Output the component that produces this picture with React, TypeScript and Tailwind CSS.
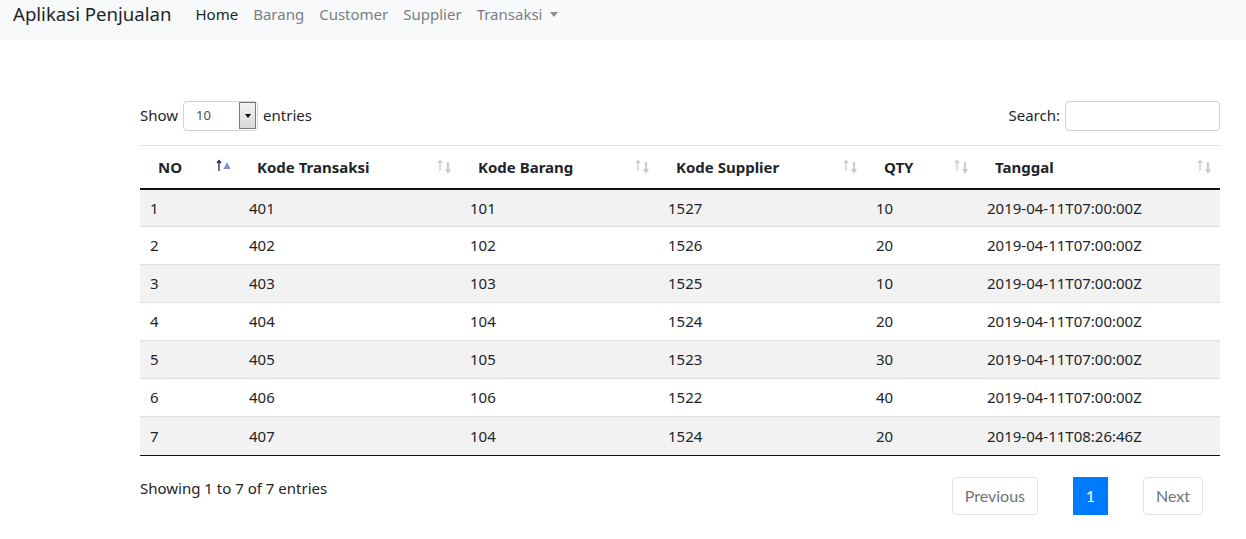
import React from "react";

const rows = [
  ["1", "401", "101", "1527", "10", "2019-04-11T07:00:00Z"],
  ["2", "402", "102", "1526", "20", "2019-04-11T07:00:00Z"],
  ["3", "403", "103", "1525", "10", "2019-04-11T07:00:00Z"],
  ["4", "404", "104", "1524", "20", "2019-04-11T07:00:00Z"],
  ["5", "405", "105", "1523", "30", "2019-04-11T07:00:00Z"],
  ["6", "406", "106", "1522", "40", "2019-04-11T07:00:00Z"],
  ["7", "407", "104", "1524", "20", "2019-04-11T08:26:46Z"],
];

const headers = [
  { label: "NO", w: "w-[99px]", active: true },
  { label: "Kode Transaksi", w: "w-[221px]" },
  { label: "Kode Barang", w: "w-[198px]" },
  { label: "Kode Supplier", w: "w-[208px]" },
  { label: "QTY", w: "w-[111px]" },
  { label: "Tanggal", w: "w-[243px]" },
];

function SortIcon({ active }: { active?: boolean }) {
  return (
    <svg width="20" height="16" viewBox="0 0 20 16" className="absolute right-[5px] top-[13px]">
      {/* up arrow */}
      <path d="M5 2 L5 12 M3 4 L5 1.5 L7 4" stroke={active ? "#1f2a44" : "#c5cbd6"} strokeWidth="1.3" fill="none" />
      {active ? (
        <path d="M13 3 L16.5 10 L9.5 10 Z" fill="#7f8fd8" />
      ) : (
        <>
          <path d="M13 3 L13 13" stroke="#c9cccf" strokeWidth="2.2" />
          <path d="M10 10 L13 15 L16 10 Z" fill="#c9cccf" />
        </>
      )}
    </svg>
  );
}

export default function App() {
  return (
    <div className="min-h-[539px] bg-white font-['Noto_Sans',sans-serif] text-[#212529]">
      <nav className="h-10 bg-[#f8f9fa] flex items-center px-[13px] pb-[12px]">
        <span className="text-[18.6px] mr-[24px]">Aplikasi Penjualan</span>
        <div className="flex items-center gap-[15px] text-[15px] text-[#7a7f84]">
          <span className="text-[#212529]">Home</span>
          <span>Barang</span>
          <span>Customer</span>
          <span>Supplier</span>
          <span className="flex items-center gap-[8px]">
            Transaksi
            <span className="border-x-[4px] border-t-[5px] border-x-transparent border-t-[#8a8f94] mt-[1px]"></span>
          </span>
        </div>
      </nav>

      <div className="w-[1080px] ml-[140px] pt-[60px] text-[15px]">
        <div className="flex justify-between items-center h-[31px]">
          <div className="flex items-center gap-[5px]">
            <span>Show</span>
            <div className="w-[75px] h-[30px] border border-[#ced4da] rounded flex items-center justify-between pl-3 pr-[1px] text-[13px] text-[#495057]">
              10
              <span className="w-[17px] h-[27px] border border-[#7a7a7a] bg-gradient-to-b from-[#f3f3f3] to-[#d8d8d8] flex items-center justify-center">
                <span className="border-x-[3.5px] border-t-[4px] border-x-transparent border-t-black"></span>
              </span>
            </div>
            <span>entries</span>
          </div>
          <div className="flex items-center gap-[5px]">
            <span>Search:</span>
            <div className="w-[155px] h-[30px] border border-[#ced4da] rounded"></div>
          </div>
        </div>

        <table className="mt-[14px] w-full border-collapse border-t border-[#dee2e6]">
          <thead>
            <tr className="h-[43px] border-b-2 border-[#111]">
              {headers.map((h) => (
                <th key={h.label} className={`${h.w} relative text-left font-bold pl-[18px]`}>
                  {h.label}
                  <SortIcon active={h.active} />
                </th>
              ))}
            </tr>
          </thead>
          <tbody>
            {rows.map((r, i) => (
              <tr key={i} className={`h-[38px] border-t border-[#dee2e6] ${i % 2 === 0 ? "bg-[#f2f2f2]" : "bg-white"}`}>
                {r.map((c, j) => (
                  <td key={j} className="pl-[10px]">{c}</td>
                ))}
              </tr>
            ))}
          </tbody>
        </table>
        <div className="border-t border-[#111]"></div>

        <div className="flex justify-between items-start mt-[21px]">
          <span>Showing 1 to 7 of 7 entries</span>
          <div className="flex items-center gap-[35px] mr-[17px] font-['Lato',sans-serif] text-[16px]">
            <span className="h-[38px] px-3 flex items-center border border-[#dee2e6] rounded text-[#6c757d]">Previous</span>
            <span className="h-[38px] w-[35px] flex items-center justify-center bg-[#007bff] text-white">1</span>
            <span className="h-[38px] px-3 flex items-center border border-[#dee2e6] rounded text-[#6c757d]">Next</span>
          </div>
        </div>
      </div>
    </div>
  );
}
